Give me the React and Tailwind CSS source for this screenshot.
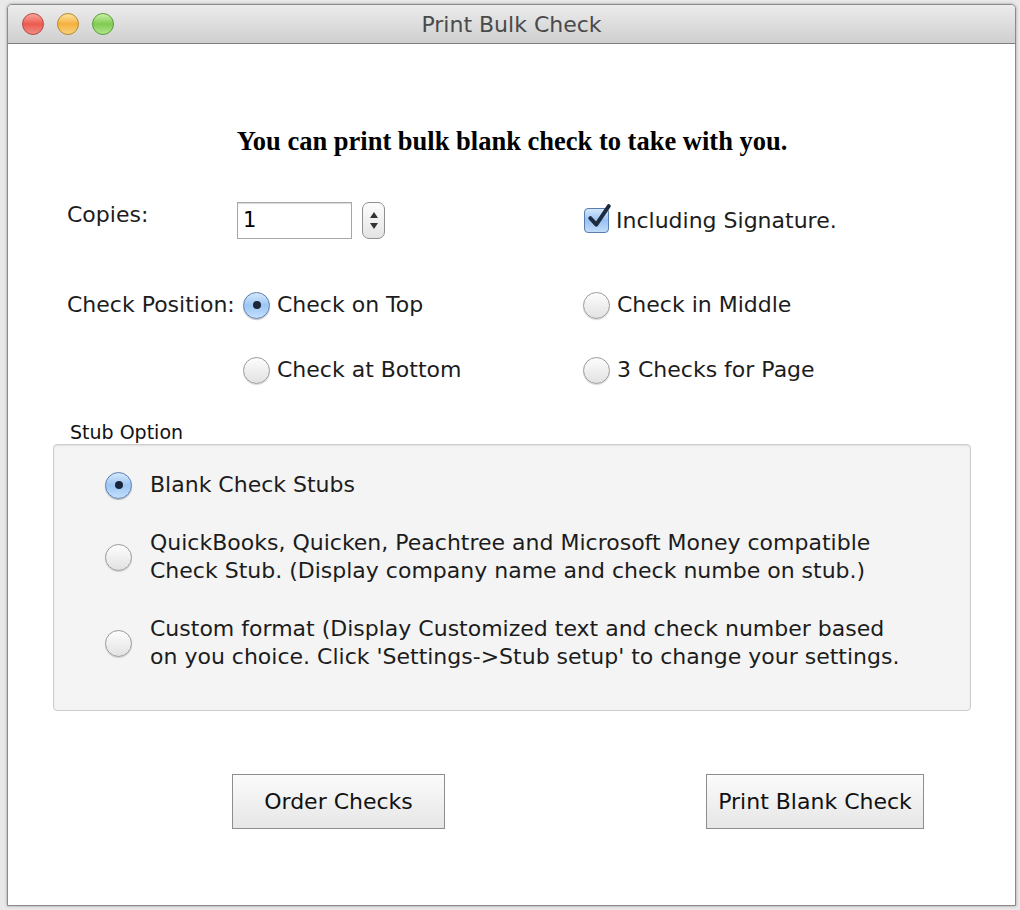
import React from 'react'

const ui = { fontFamily: '"DejaVu Sans", "Liberation Sans", sans-serif' }

function Radio({ checked }) {
  return checked ? (
    <span className="w-[27px] h-[27px] shrink-0 rounded-full border border-[#5a7fae] bg-gradient-to-b from-[#d6e8fc] via-[#9cc6f3] to-[#c4e0fc] shadow-[0_1px_1px_rgba(0,0,0,0.25)] flex items-center justify-center">
      <span className="w-[8px] h-[8px] rounded-full bg-[#1a2638]" />
    </span>
  ) : (
    <span className="w-[27px] h-[27px] shrink-0 rounded-full border border-[#9a9a9a] bg-gradient-to-b from-[#fdfdfd] to-[#e2e2e2] shadow-[0_1px_1px_rgba(0,0,0,0.15)]" />
  )
}

function RadioItem({ checked, label }) {
  return (
    <div className="flex items-center gap-[7px]">
      <Radio checked={checked} />
      <span className="text-[22px] leading-[28px] text-[#1c1c1c]">{label}</span>
    </div>
  )
}

export default function App() {
  return (
    <div className="w-[1020px] h-[910px] bg-[#e9e9e9] pt-[4px] pl-[7px]" style={ui}>
      <div className="w-[1009px] h-[902px] flex flex-col bg-white border border-[#8a8a8a] rounded-t-[5px] shadow-[0_0_3px_rgba(0,0,0,0.35)] overflow-hidden">
        {/* title bar */}
        <div className="h-[39px] shrink-0 relative flex items-center bg-gradient-to-b from-[#ececec] to-[#cfcfcf] border-b border-[#7d7d7d]">
          <div className="flex gap-[13px] pl-[14px]">
            <span className="w-[22px] h-[22px] rounded-full border border-[#b14a45] bg-gradient-to-b from-[#f7a49c] via-[#ec5a50] to-[#f08a80]" />
            <span className="w-[22px] h-[22px] rounded-full border border-[#b58a2a] bg-gradient-to-b from-[#fce39b] via-[#f4b13c] to-[#f9d27a]" />
            <span className="w-[22px] h-[22px] rounded-full border border-[#5c9a3e] bg-gradient-to-b from-[#c9f0a4] via-[#7fcb52] to-[#b1e58a]" />
          </div>
          <div className="absolute inset-0 flex items-center justify-center text-[22px] text-[#4a4a4a]">Print Bulk Check</div>
        </div>

        {/* content */}
        <div className="flex-1 flex flex-col pl-[45px] pr-[44px]">
          <h1 className="mt-[82px] text-center text-[26.5px] leading-[30px] font-bold text-black" style={{ fontFamily: '"Liberation Serif", serif' }}>
            You can print bulk blank check to take with you.
          </h1>

          <div className="mt-[46px] pl-[14px] flex items-center">
            <div className="w-[170px] text-[22px] leading-[28px] text-[#1c1c1c] -mt-[12px]">Copies:</div>
            <div className="w-[347px] flex items-center gap-[10px]">
              <div className="w-[115px] h-[37px] border border-[#a7a7a7] shadow-[inset_0_1px_1px_rgba(0,0,0,0.15)] flex items-center px-[5px] text-[21px] text-black">1</div>
              <div className="w-[23px] h-[37px] rounded-[7px] border border-[#8f8f8f] bg-gradient-to-b from-[#fdfdfd] to-[#e4e4e4] flex flex-col items-center justify-center gap-[5px]">
                <span className="w-0 h-0 border-l-[4px] border-r-[4px] border-b-[6px] border-l-transparent border-r-transparent border-b-[#333]" />
                <span className="w-0 h-0 border-l-[4px] border-r-[4px] border-t-[6px] border-l-transparent border-r-transparent border-t-[#333]" />
              </div>
            </div>
            <div className="flex items-center gap-[7px]">
              <span className="w-[25px] h-[25px] rounded-[4px] border border-[#5a7fae] bg-gradient-to-b from-[#d6e7fb] via-[#99c2f1] to-[#c2dcfa] relative">
                <svg viewBox="0 0 24 24" className="absolute -top-[5px] left-[1px] w-[26px] h-[26px]">
                  <path d="M4 13 L9.5 19 L21 2" fill="none" stroke="#1d2b3f" strokeWidth="3.6" strokeLinejoin="round" strokeLinecap="round" />
                </svg>
              </span>
              <span className="text-[22px] leading-[28px] text-[#1c1c1c]">Including Signature.</span>
            </div>
          </div>

          <div className="mt-[52px] pl-[14px] flex items-center">
            <div className="w-[176px] text-[22px] leading-[28px] text-[#1c1c1c] whitespace-nowrap">Check Position:</div>
            <div className="w-[340px]"><RadioItem checked label="Check on Top" /></div>
            <RadioItem label="Check in Middle" />
          </div>

          <div className="mt-[37px] pl-[14px] flex items-center">
            <div className="w-[176px]" />
            <div className="w-[340px]"><RadioItem label="Check at Bottom" /></div>
            <RadioItem label="3 Checks for Page" />
          </div>

          <div className="mt-[37px] pl-[17px] text-[19px] leading-[22px] text-[#111]">Stub Option</div>

          <div className="mt-[1px] h-[267px] rounded-[4px] border border-[#cdcdcd] bg-[#f4f4f4] shadow-[inset_0_1px_2px_rgba(0,0,0,0.08)] pl-[51px] pr-[10px] pt-[26px] flex flex-col gap-[30px] text-[22px] leading-[28px] text-[#1c1c1c]">
            <div className="flex items-center gap-[18px]">
              <Radio checked />
              <span>Blank Check Stubs</span>
            </div>
            <div className="flex items-center gap-[18px]">
              <Radio />
              <span className="whitespace-nowrap">QuickBooks, Quicken, Peachtree and Microsoft Money compatible<br />Check Stub. (Display company name and check numbe on stub.)</span>
            </div>
            <div className="flex items-center gap-[18px]">
              <Radio />
              <span className="whitespace-nowrap">Custom format (Display Customized text and check number based<br />on you choice. Click 'Settings-&gt;Stub setup' to change your settings.</span>
            </div>
          </div>

          <div className="mt-[63px] flex">
            <button className="ml-[179px] w-[213px] h-[55px] border border-[#8d8d8d] bg-gradient-to-b from-[#fbfbfb] to-[#e6e6e6] text-[22px] text-[#111]">Order Checks</button>
            <button className="ml-[261px] w-[218px] h-[55px] border border-[#8d8d8d] bg-gradient-to-b from-[#fbfbfb] to-[#e6e6e6] text-[22px] text-[#111] whitespace-nowrap">Print Blank Check</button>
          </div>
        </div>
      </div>
    </div>
  )
}
